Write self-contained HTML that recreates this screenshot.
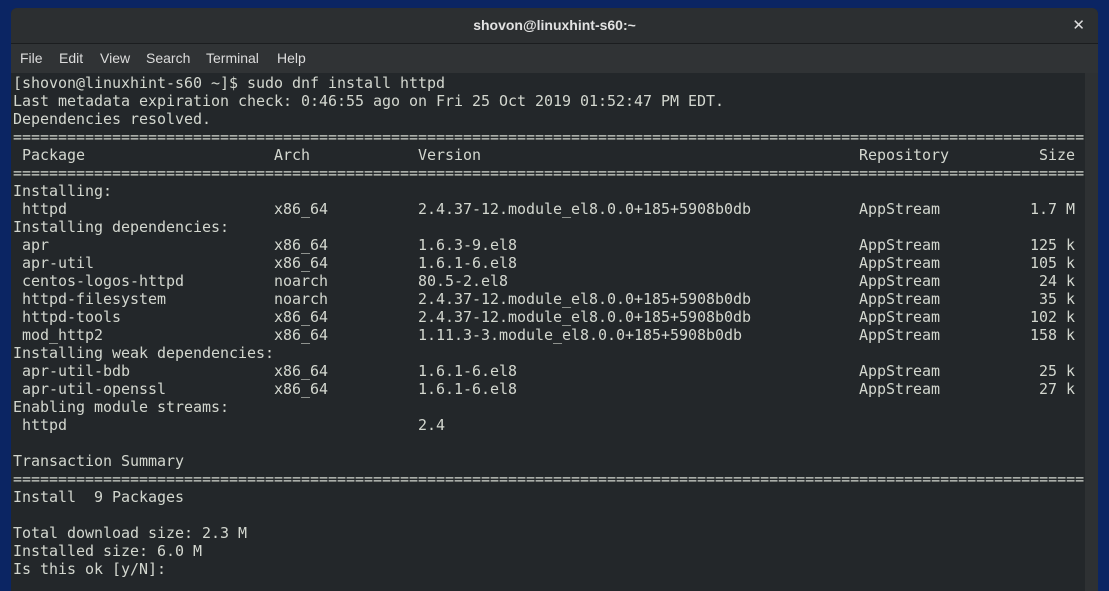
<!DOCTYPE html>
<html><head><meta charset="utf-8"><style>
html,body{margin:0;padding:0;width:1109px;height:591px;overflow:hidden;background:#0b2563;}
.win{position:absolute;left:11px;top:8px;width:1087px;height:583px;background:#23272a;border-radius:6px 6px 0 0;overflow:hidden;}
.title{position:absolute;left:0;top:0;width:100%;height:35px;background:#2c2f31;border-bottom:1px solid #1b1d1f;color:#e2e2e2;font:bold 14px "Liberation Sans",sans-serif;text-align:center;line-height:35px;}
.close{position:absolute;right:13px;top:0;color:#ddd;font:bold 15px "DejaVu Sans",sans-serif;line-height:35px;}
.menu{position:absolute;left:0;top:36px;width:100%;height:29px;background:#303335;color:#dcdcdc;font:14px "Liberation Sans",sans-serif;line-height:29px;}
.menu span{position:absolute;top:0;}
.term{position:absolute;left:0;top:65px;width:1074px;height:520px;background:#23272a;overflow:hidden;}
.sb{position:absolute;left:1074px;top:65px;width:13px;height:520px;background:#2e3133;}
pre{margin:0;position:absolute;left:2px;top:1px;font:15px "DejaVu Sans Mono","Liberation Mono",monospace;letter-spacing:-0.03px;line-height:18px;color:#d3d7cf;}
.a{display:inline-block;width:261px}.b{display:inline-block;width:144px}.c{display:inline-block;width:441px}.d{display:inline-block;width:135px}.e{display:inline-block;width:81px;text-align:right}
</style></head><body>
<div class="win">
<div class="title">shovon@linuxhint-s60:~<span class="close">✕</span></div>
<div class="menu"><span style="left:9px">File</span><span style="left:48px">Edit</span><span style="left:89px">View</span><span style="left:135px">Search</span><span style="left:195px">Terminal</span><span style="left:266px">Help</span></div>
<div class="term"><pre>[shovon@linuxhint-s60 ~]$ sudo dnf install httpd
Last metadata expiration check: 0:46:55 ago on Fri 25 Oct 2019 01:52:47 PM EDT.
Dependencies resolved.
=======================================================================================================================
<span class="a"> Package</span><span class="b">Arch</span><span class="c">Version</span><span class="d">Repository</span><span class="e">Size</span>
=======================================================================================================================
Installing:
<span class="a"> httpd</span><span class="b">x86_64</span><span class="c">2.4.37-12.module_el8.0.0+185+5908b0db</span><span class="d">AppStream</span><span class="e">1.7 M</span>
Installing dependencies:
<span class="a"> apr</span><span class="b">x86_64</span><span class="c">1.6.3-9.el8</span><span class="d">AppStream</span><span class="e">125 k</span>
<span class="a"> apr-util</span><span class="b">x86_64</span><span class="c">1.6.1-6.el8</span><span class="d">AppStream</span><span class="e">105 k</span>
<span class="a"> centos-logos-httpd</span><span class="b">noarch</span><span class="c">80.5-2.el8</span><span class="d">AppStream</span><span class="e">24 k</span>
<span class="a"> httpd-filesystem</span><span class="b">noarch</span><span class="c">2.4.37-12.module_el8.0.0+185+5908b0db</span><span class="d">AppStream</span><span class="e">35 k</span>
<span class="a"> httpd-tools</span><span class="b">x86_64</span><span class="c">2.4.37-12.module_el8.0.0+185+5908b0db</span><span class="d">AppStream</span><span class="e">102 k</span>
<span class="a"> mod_http2</span><span class="b">x86_64</span><span class="c">1.11.3-3.module_el8.0.0+185+5908b0db</span><span class="d">AppStream</span><span class="e">158 k</span>
Installing weak dependencies:
<span class="a"> apr-util-bdb</span><span class="b">x86_64</span><span class="c">1.6.1-6.el8</span><span class="d">AppStream</span><span class="e">25 k</span>
<span class="a"> apr-util-openssl</span><span class="b">x86_64</span><span class="c">1.6.1-6.el8</span><span class="d">AppStream</span><span class="e">27 k</span>
Enabling module streams:
<span class="a"> httpd</span><span class="b"></span>2.4

Transaction Summary
=======================================================================================================================
Install  9 Packages

Total download size: 2.3 M
Installed size: 6.0 M
Is this ok [y/N]: </pre></div>
<div class="sb"></div>
</div>
</body></html>
